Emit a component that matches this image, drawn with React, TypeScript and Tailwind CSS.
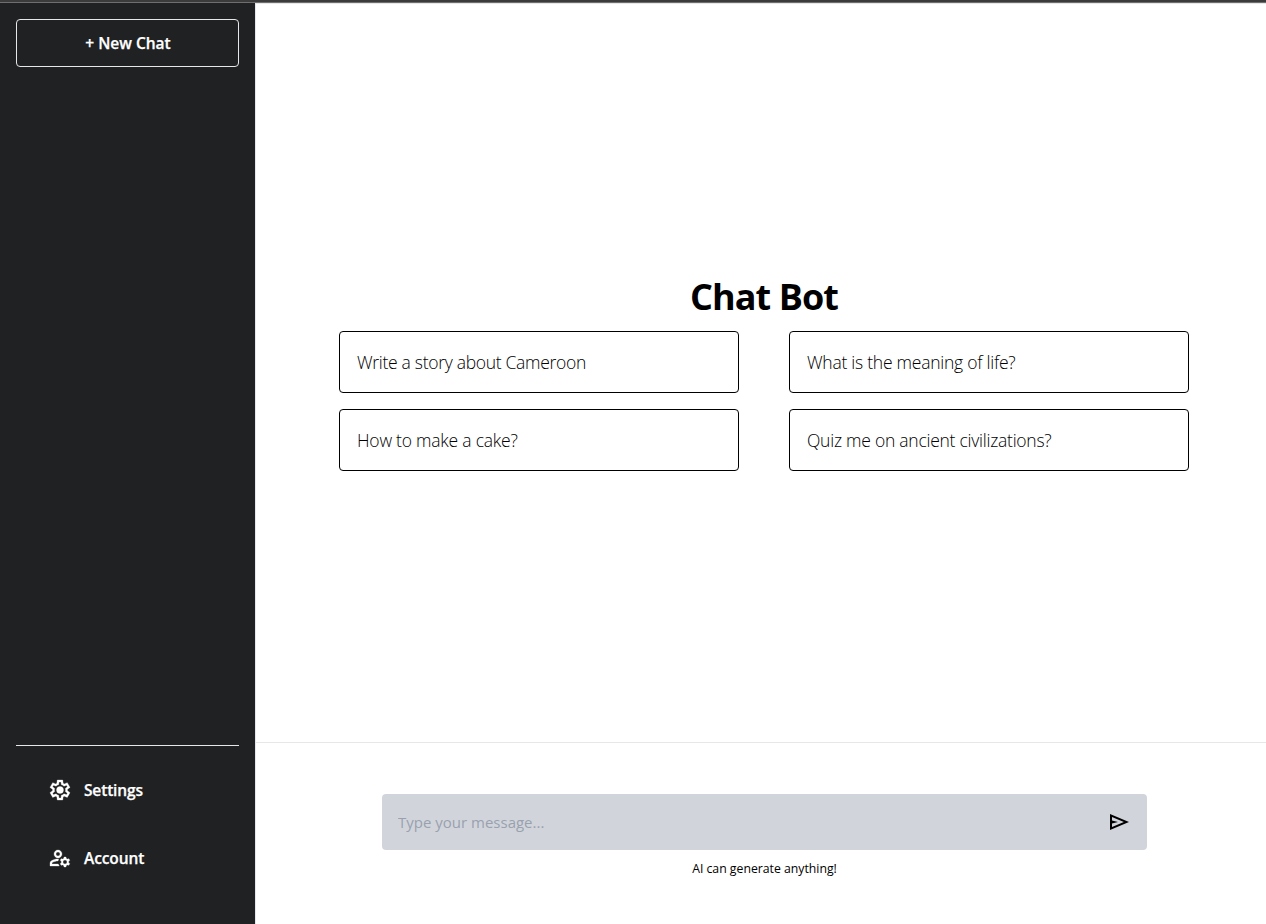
import { MdOutlineManageAccounts } from "react-icons/md";

const prompts = [
  { text: "Write a story about Cameroon", tracking: "tracking-[-0.3px]" },
  { text: "What is the meaning of life?", tracking: "tracking-[-0.25px]" },
  { text: "How to make a cake?", tracking: "tracking-[-0.23px]" },
  { text: "Quiz me on ancient civilizations?", tracking: "tracking-[-0.25px]" },
];

function SettingsIcon() {
  return (
    <svg viewBox="0 0 24 24" className="size-6" fill="currentColor" stroke="currentColor" strokeWidth="0.3">
      <path d="m9.25 22l-.4-3.2q-.325-.125-.612-.3t-.563-.375L4.7 19.375l-2.75-4.75l2.575-1.95Q4.5 12.5 4.5 12.338v-.675q0-.163.025-.338L1.95 9.375l2.75-4.75l2.975 1.25q.275-.2.575-.375t.6-.3l.4-3.2h5.5l.4 3.2q.325.125.613.3t.562.375l2.975-1.25l2.75 4.75l-2.575 1.95q.025.175.025.338v.674q0 .163-.05.338l2.575 1.95l-2.75 4.75l-2.95-1.25q-.275.2-.575.375t-.6.3l-.4 3.2zM11 20h1.975l.35-2.65q.775-.2 1.438-.587t1.212-.938l2.475 1.025l.975-1.7l-2.15-1.625q.125-.35.175-.737T17.5 12t-.05-.787t-.175-.738l2.15-1.625l-.975-1.7l-2.475 1.05q-.55-.575-1.212-.962t-1.438-.588L13 4h-1.975l-.35 2.65q-.775.2-1.437.588t-1.213.937L5.55 7.15l-.975 1.7l2.15 1.6q-.125.375-.175.75t-.05.8q0 .4.05.775t.175.75l-2.15 1.625l.975 1.7l2.475-1.05q.55.575 1.213.963t1.437.587z" />
      <circle cx="12" cy="12" r="3.5" />
    </svg>
  );
}

function SendIcon() {
  return (
    <svg viewBox="0 0 24 24" className="size-6" fill="currentColor">
      <path d="M3 20V4l19 8zm2-3l11.85-5L5 7v3.5l6 1.5l-6 1.5z" />
    </svg>
  );
}

export default function App() {
  return (
    <div className="flex h-[924px] flex-col overflow-hidden bg-white font-['Open_Sans',sans-serif] text-black">
      <div className="h-[3px] shrink-0 border-b border-[#6e6e6e] bg-[#3b3b3b]" />
      <div className="flex min-h-0 flex-1">
        <aside className="flex w-64 shrink-0 flex-col border-r border-gray-200 bg-[#202123] p-4 pb-0 text-white">
          <button className="h-12 w-[223px] rounded border border-gray-200 pt-0.5 pl-px text-[15.5px] font-semibold [-webkit-text-stroke:0.25px_white]">
            + New Chat
          </button>
          <nav className="mt-auto h-[179px] w-[223px] border-t border-gray-200 pt-8 pl-8">
            <a className="flex h-6 items-center gap-3 text-[15.5px] font-semibold [-webkit-text-stroke:0.25px_white]">
              <SettingsIcon />
              <span className="pt-0.5 tracking-[-0.15px]">Settings</span>
            </a>
            <a className="mt-11 flex h-6 items-center gap-3 text-[15.5px] font-semibold [-webkit-text-stroke:0.25px_white]">
              <MdOutlineManageAccounts className="size-6 [&>path]:stroke-[0.3px] [&>path[fill=none]]:stroke-none" />
              <span className="pt-0.5 tracking-[-0.1px]">Account</span>
            </a>
          </nav>
        </aside>
        <main className="flex min-w-0 flex-1 flex-col border-t border-gray-200">
          <section className="flex h-[739px] flex-col items-center border-b border-gray-200 pt-[273px] pl-[6px]">
            <h1 className="h-[54px] text-[36px] leading-10 font-bold tracking-[-0.9px]">Chat Bot</h1>
            <div className="grid grid-cols-[400px_400px] gap-x-[50px] gap-y-4">
              {prompts.map((p) => (
                <button
                  key={p.text}
                  className="h-[62px] rounded border border-black pr-4 pl-[17px] text-left text-[17.5px] font-light"
                >
                  <span className={p.tracking}>{p.text}</span>
                </button>
              ))}
            </div>
          </section>
          <section className="flex flex-col items-center pt-[51px] pl-[7px]">
            <form className="flex h-14 w-[765px] items-center justify-between rounded bg-[#d1d5db] pr-[16.5px] pl-4">
              <input
                className="w-80 text-[15px] outline-none placeholder:text-gray-400"
                placeholder="Type your message..."
              />
              <SendIcon />
            </form>
            <p className="mt-[9px] text-[12.25px] leading-5">AI can generate anything!</p>
          </section>
        </main>
      </div>
    </div>
  );
}
